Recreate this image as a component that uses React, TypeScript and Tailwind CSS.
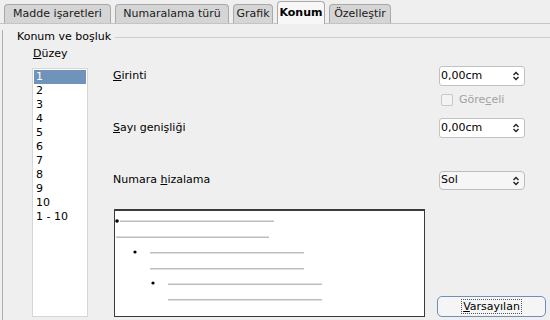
import React from "react";

const tabs = [
  { label: "Madde işaretleri", w: "w-[107px]", active: false },
  { label: "Numaralama türü", w: "w-[114px]", active: false },
  { label: "Grafik", w: "w-[40px]", active: false },
  { label: "Konum", w: "w-[48px]", active: true },
  { label: "Özelleştir", w: "w-[62px]", active: false },
];

const levels = ["1", "2", "3", "4", "5", "6", "7", "8", "9", "10", "1 - 10"];

const UpDown = () => (
  <svg width="8" height="10" viewBox="0 0 8 10" className="mr-[4px]">
    <path d="M1.5 4 L4 1.5 L6.5 4" fill="none" stroke="#222" strokeWidth="1.4" />
    <path d="M1.5 6 L4 8.5 L6.5 6" fill="none" stroke="#222" strokeWidth="1.4" />
  </svg>
);

const SpinBox = ({ value }: { value: string }) => (
  <div className="flex items-center justify-between w-[86px] h-[20px] bg-white border border-[#c2c2c2] rounded-[3px] pl-[1px]">
    <span>{value}</span>
    <UpDown />
  </div>
);

const App = () => {
  return (
    <div
      className="w-[550px] h-[320px] bg-[#efefef] overflow-hidden text-[10px] text-black"
      style={{ fontFamily: '"DejaVu Sans", sans-serif' }}
    >
      {/* tab strip */}
      <div className="flex items-end h-[24px] pl-[4px] gap-[4px] border-b border-[#c4c4c4]">
        {tabs.map((t) =>
          t.active ? (
            <div
              key={t.label}
              className={`${t.w} h-[23px] -mb-px flex items-center justify-center bg-[#f7f7f7] border border-b-0 border-[#a9a9a9] rounded-t-[4px] font-bold text-[11px]`}
            >
              {t.label}
            </div>
          ) : (
            <div
              key={t.label}
              className={`${t.w} h-[19px] flex items-center justify-center bg-[#d5d5d5] border border-b-0 border-[#a9a9a9] rounded-t-[4px] text-[11px] text-[#202020]`}
            >
              {t.label}
            </div>
          )
        )}
      </div>

      {/* page */}
      <div className="ml-[2px] border-l border-[#b0b0b0] h-[296px]">
        <div className="flex items-center h-[14px] mt-[6px] pl-[14px] text-[11px]">
          <span>Konum ve boşluk</span>
          <div className="flex-1 h-px bg-[#cdcdcd] ml-[4px]" />
        </div>

        <div className="flex">
          {/* level list */}
          <div className="ml-[29px] w-[56px] shrink-0">
            <div className="h-[12px] mt-[4px] pl-[1px] text-[11px] leading-[12px]">
              <u>D</u>üzey
            </div>
            <div className="mt-[8px] h-[249px] bg-white border border-[#d6d6d6] pt-[1px] px-[1px] text-[11px]">
              {levels.map((l, i) => (
                <div
                  key={l}
                  className={`h-[14px] leading-[14px] pl-[2px] ${i === 0 ? "bg-[#7093b9] text-white" : ""}`}
                >
                  {l}
                </div>
              ))}
            </div>
          </div>

          {/* settings */}
          <div className="flex-1 ml-[25px] pr-[25px] text-[11px]">
            <div className="flex items-center justify-between mt-[22px] h-[20px]">
              <span>
                <u>G</u>irinti
              </span>
              <SpinBox value="0,00cm" />
            </div>
            <div className="flex items-center justify-end h-[14px] mt-[7px]">
              <div className="flex items-center w-[86px] pl-[2px]">
                <div className="w-[12px] h-[12px] bg-[#f3f3f3] border border-[#c8c8c8] rounded-[2px]" />
                <span className="ml-[6px] text-[#a3a3a3]">
                  Göre<u>c</u>eli
                </span>
              </div>
            </div>
            <div className="flex items-center justify-between mt-[11px] h-[20px]">
              <span>
                <u>S</u>ayı genişliği
              </span>
              <SpinBox value="0,00cm" />
            </div>
            <div className="flex items-center justify-between mt-[33px] h-[19px]">
              <span>
                Numara <u>h</u>izalama
              </span>
              <div className="flex items-center justify-between w-[86px] h-[19px] bg-[#f6f6f6] border border-[#bdbdbd] rounded-[4px] pl-[1px]">
                <span>Sol</span>
                <UpDown />
              </div>
            </div>

            <div className="flex items-end mt-[19px] -mr-[23px]">
              <div className="w-[311px] h-[108px] bg-white border border-[#3a3a3a] border-t-2 ml-[1px]">
                <svg width="309" height="106" viewBox="0 0 309 106">
                  <circle cx="2" cy="10" r="1.8" fill="#000" />
                  <rect x="5" y="9.5" width="154" height="1.5" fill="#bdbdbd" />
                  <rect x="1" y="25.5" width="153" height="1.5" fill="#bdbdbd" />
                  <circle cx="20" cy="41" r="1.6" fill="#000" />
                  <rect x="35" y="41" width="154" height="1.5" fill="#bdbdbd" />
                  <rect x="35" y="57" width="154" height="1.5" fill="#bdbdbd" />
                  <circle cx="38" cy="72" r="1.6" fill="#000" />
                  <rect x="53" y="72.5" width="154" height="1.5" fill="#bdbdbd" />
                  <rect x="53" y="88" width="154" height="1.5" fill="#bdbdbd" />
                </svg>
              </div>
              <button className="ml-[12px] mb-0 w-[109px] h-[21px] rounded-[5px] border border-[#6e8fb8] bg-[#f5f5f5] flex items-center justify-center">
                <span className="border border-dotted border-[#555] px-[1px] leading-[13px]">
                  <u>V</u>arsayılan
                </span>
              </button>
            </div>
          </div>
        </div>
      </div>
    </div>
  );
};

export default App;
